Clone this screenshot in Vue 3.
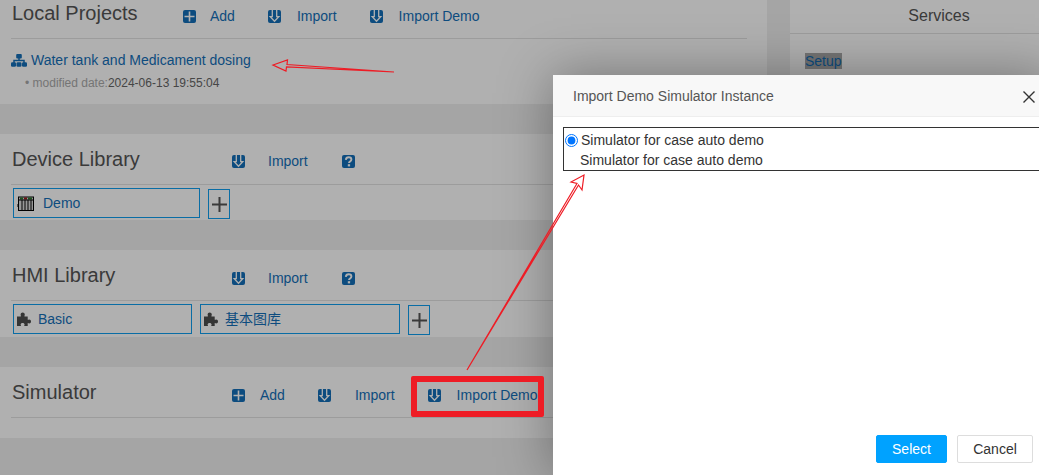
<template>
  <div class="page">
    <main class="left">
      <section class="panel local">
        <header class="head">
          <h2 class="title short">Local Projects</h2>
          <a v-for="a in localActions" :key="a.label" class="action" :class="a.cls">
            <svg class="ico" viewBox="0 0 13 13"><use :href="'#' + a.icon" /></svg>
            <span class="label">{{ a.label }}</span>
          </a>
        </header>
        <div class="project">
          <svg class="sitemap" viewBox="0 0 16 13">
            <rect x="5.2" y="0" width="5.6" height="4.4" rx="1" />
            <path d="M8 4v2.5M3 9V6.500h10V9" fill="none" stroke="currentColor" stroke-width="1.5" />
            <rect x="0" y="8.200" width="5" height="4.600" rx="1.200" />
            <rect x="5.500" y="8.200" width="5" height="4.600" rx="1.200" />
            <rect x="11" y="8.200" width="5" height="4.600" rx="1.200" />
          </svg>
          <span class="project-name">Water tank and Medicament dosing</span>
        </div>
        <div class="modified"><span class="dot">•</span> modified date:<span class="stamp">2024-06-13 19:55:04</span></div>
      </section>

      <section class="panel lib">
        <header class="head">
          <h2 class="title">Device Library</h2>
          <a class="action gap-23">
            <svg class="ico" viewBox="0 0 13 13"><use href="#i-down" /></svg>
            <span class="label">Import</span>
          </a>
          <svg class="ico help" viewBox="0 0 13 13"><use href="#i-help" /></svg>
        </header>
        <div class="chips">
          <div class="chip demo">
            <svg class="rack" viewBox="0 0 17 15">
              <rect x="1.500" y="1" width="15" height="13.500" fill="#ddd" stroke="#000" />
              <rect x="3" y="1.500" width="3" height="2" fill="#2c7a2c" />
              <rect x="7" y="1.500" width="3" height="2" fill="#a01818" />
              <rect x="11" y="1.500" width="4" height="2" fill="#2c7a2c" />
              <path d="M5 4v10M8 4v10M11 4v10M14 4v10M1 4h15M0 8v3" fill="none" stroke="#000" />
            </svg>
            <span class="chip-text">Demo</span>
          </div>
          <button class="plus">
            <svg viewBox="0 0 15 15"><path d="M7.500 0v15M0 7.500h15" stroke="currentColor" stroke-width="2" /></svg>
          </button>
        </div>
      </section>

      <section class="panel lib hmi">
        <header class="head">
          <h2 class="title">HMI Library</h2>
          <a class="action gap-23">
            <svg class="ico" viewBox="0 0 13 13"><use href="#i-down" /></svg>
            <span class="label">Import</span>
          </a>
          <svg class="ico help" viewBox="0 0 13 13"><use href="#i-help" /></svg>
        </header>
        <div class="chips">
          <div v-for="c in hmiLibs" :key="c.name" class="chip" :class="c.cls">
            <svg class="puzzle" viewBox="0 0 14 14"><use href="#i-puzzle" /></svg>
            <span class="chip-text">{{ c.name }}</span>
          </div>
          <button class="plus">
            <svg viewBox="0 0 15 15"><path d="M7.500 0v15M0 7.500h15" stroke="currentColor" stroke-width="2" /></svg>
          </button>
        </div>
      </section>

      <section class="panel sim">
        <header class="head">
          <h2 class="title">Simulator</h2>
          <a class="action gap-15">
            <svg class="ico" viewBox="0 0 13 13"><use href="#i-add" /></svg>
            <span class="label">Add</span>
          </a>
          <a class="action gap-24">
            <svg class="ico" viewBox="0 0 13 13"><use href="#i-down" /></svg>
            <span class="label">Import</span>
          </a>
          <a class="action">
            <svg class="ico" viewBox="0 0 13 13"><use href="#i-down" /></svg>
            <span class="label">Import Demo</span>
          </a>
        </header>
      </section>
    </main>

    <aside class="right">
      <div class="services">Services</div>
      <div class="service-list"><span class="setup">Setup</span></div>
    </aside>

    <svg class="defs" width="0" height="0">
      <symbol id="i-add" viewBox="0 0 13 13">
        <rect width="13" height="13" rx="2" fill="#146fb8" />
        <path d="M6.500 1.500v10M1.500 6.500h10" stroke="#fff" stroke-width="1.600" />
      </symbol>
      <symbol id="i-down" viewBox="0 0 13 13">
        <rect width="13" height="13" rx="2" fill="#146fb8" />
        <path d="M4.300 0v6.700H2.200L6.500 11.300 10.800 6.700H8.700V0" fill="none" stroke="#fff" stroke-width="1.300" />
      </symbol>
      <symbol id="i-help" viewBox="0 0 13 13">
        <rect width="13" height="13" rx="2" fill="#146fb8" />
        <path d="M3.800 4.800C4 3 5.200 2.300 6.700 2.300c1.600 0 2.700 1 2.700 2.300 0 2-2.400 1.900-2.400 3.500" fill="none" stroke="#fff" stroke-width="1.900" />
        <rect x="5.800" y="9.200" width="2.300" height="2.200" fill="#fff" />
      </symbol>
      <symbol id="i-puzzle" viewBox="0 0 14 14">
        <path d="M0 4.500h3.500C4.500 4.500 3.600 3.600 3.600 2.500 3.600 1.200 4.600.5 5.700.5s2.100.7 2.100 2c0 1.100-.9 2-.1 2h3v3c0 .8.900-.1 1.500-.1 1.100 0 1.800.9 1.800 2s-.7 2-1.800 2c-.6 0-1.500-.9-1.500-.1V14H7.500c-.8 0 .1-.9.1-1.500 0-1-.9-1.600-2-1.600s-2 .6-2 1.600c0 .6.900 1.500.1 1.500H0z" fill="#4d4d4d" />
      </symbol>
    </svg>

    <div class="overlay"></div>

    <div class="modal">
      <div class="modal-head">
        <span class="modal-title">Import Demo Simulator Instance</span>
        <svg class="close" viewBox="0 0 12 12"><path d="M.5.5l11 11M11.500.5l-11 11" stroke="#333" stroke-width="1.400" /></svg>
      </div>
      <div class="modal-body">
        <label class="option">
          <span class="radio-line"><input type="radio" class="radio" checked /><span>Simulator for case auto demo</span></span>
          <span class="desc">Simulator for case auto demo</span>
        </label>
      </div>
      <div class="modal-foot">
        <button class="btn primary">Select</button>
        <button class="btn">Cancel</button>
      </div>
    </div>

    <div class="mark"></div>
    <svg class="arrows" viewBox="0 0 1039 475">
      <path d="M394 72 287 64.500 287.500 60 273 65 286 71 286.500 67Z" />
      <path d="M467 370 577 183.500 571 182 584 175 582 190 578.500 185Z" />
    </svg>
  </div>
</template>

<script setup>
const localActions = [
  { label: 'Add', icon: 'i-add', cls: 'gap-14' },
  { label: 'Import', icon: 'i-down' },
  { label: 'Import Demo', icon: 'i-down' }
];

const hmiLibs = [
  { name: 'Basic', cls: 'basic' },
  { name: '基本图库', cls: 'cn' }
];
</script>

<style>
html, body { margin: 0; overflow: hidden; }
</style>

<style scoped>
.page {
  position: relative;
  display: flex;
  width: 1039px;
  height: 475px;
  overflow: hidden;
  background: #f0f0f0;
  font-family: "Liberation Sans", "Noto Sans CJK SC", sans-serif;
  font-size: 14px;
  color: #555;
}
.left { width: 767px; flex: none; }
.right { margin-left: 23px; width: 298px; flex: none; background: #fff; height: 475px; }
.defs { position: absolute; }

.panel { background: #fff; padding: 0 20px 0 11px; margin-bottom: 30px; box-sizing: border-box; }
.local { height: 104px; }
.lib { height: 86px; }
.hmi { height: 87px; }
.sim { height: 71px; }

.head {
  display: flex;
  align-items: center;
  height: 38px;
  border-bottom: 1px solid #e2e2e2;
}
.lib .head, .sim .head { height: 50px; }
.title {
  width: 220px;
  margin: 0 0 0 1px;
  flex: none;
  font-size: 20px;
  font-weight: normal;
  color: #555;
}
.title.short { width: 171px; padding-bottom: 12px; }
.local .action { margin-top: -6px; }
.lib .action, .lib .help { margin-top: 4px; }
.hmi .action, .hmi .help { margin-top: 6px; }
.sim .action { margin-top: 6px; }
.action { display: flex; align-items: center; margin-right: 33px; color: #146fb8; }
.label { margin-left: 16px; white-space: nowrap; }
.gap-14 .label { margin-left: 14px; }
.gap-15 .label { margin-left: 15px; }
.gap-23 .label { margin-left: 23px; }
.gap-24 .label { margin-left: 24px; }
.ico { width: 13px; height: 13px; flex: none; margin-top: 1px; }
.help { margin-left: 1px; }

.project { display: flex; align-items: center; margin-top: 13px; color: #146fb8; }
.sitemap { width: 16px; height: 13px; margin-right: 4px; fill: currentColor; }
.project-name { white-space: nowrap; }
.modified { margin-top: 8px; padding-left: 14px; font-size: 12px; color: #aaa; }
.stamp { color: #666; }

.chips { display: flex; gap: 8px; padding: 3px 0 0 2px; }
.chip {
  display: flex;
  align-items: center;
  height: 30px;
  box-sizing: border-box;
  border: 1px solid #0f9ef0;
  padding-left: 3px;
  color: #146fb8;
}
.demo { width: 187px; }
.basic { width: 179px; }
.cn { width: 200px; }
.cn .chip-text { margin-top: -2px; }
.rack { width: 17px; height: 15px; margin-right: 9px; }
.puzzle { width: 14px; height: 14px; margin-right: 7px; }
.plus {
  width: 22px;
  height: 30px;
  margin-top: 1px;
  padding: 0;
  border: 1px solid #0f9ef0;
  background: none;
  color: #555;
  display: flex;
  align-items: center;
  justify-content: center;
}
.plus svg { width: 15px; height: 15px; }

.services {
  height: 33px;
  line-height: 32px;
  text-align: center;
  font-size: 16px;
  border-bottom: 1px solid #e2e2e2;
  color: #555;
}
.service-list { padding: 19px 15px; }
.setup { background: #aaa; color: #146fb8; }

.overlay { position: absolute; inset: 0; background: rgba(0, 0, 0, 0.31); }

.modal {
  position: absolute;
  left: 553px;
  top: 75px;
  width: 500px;
  height: 400px;
  background: #fff;
  box-shadow: 0 0 50px rgba(0, 0, 0, 0.35);
  display: flex;
  flex-direction: column;
  color: #333;
}
.modal-head {
  height: 42px;
  box-sizing: border-box;
  flex: none;
  display: flex;
  align-items: center;
  padding-left: 20px;
  background: #f8f8f8;
  border-bottom: 1px solid #eee;
  color: #555;
}
.close { position: absolute; left: 470px; top: 16px; width: 12px; height: 12px; }
.modal-body { padding: 10px; flex: 1; }
.option {
  display: flex;
  flex-direction: column;
  height: 44px;
  box-sizing: border-box;
  border: 1px solid #333;
  padding-top: 2px;
  line-height: 20px;
}
.radio-line { display: flex; align-items: center; }
.radio { width: 13px; height: 13px; margin: 0 3px 0 1px; accent-color: #0075ff; }
.desc { padding-left: 16px; }
.modal-foot { position: absolute; left: 323px; top: 360px; display: flex; gap: 10px; }
.btn {
  height: 28px;
  width: 76px;
  box-sizing: border-box;
  border: 1px solid #ddd;
  border-radius: 2px;
  background: #fff;
  color: #333;
  font: 14px "Liberation Sans", sans-serif;
  padding: 0;
}
.btn.primary { width: 71px; background: #00a2ff; border-color: #00a2ff; color: #fff; }

.mark {
  position: absolute;
  left: 411px;
  top: 376px;
  width: 133px;
  height: 41px;
  box-sizing: border-box;
  border: 6px solid #ee1c25;
  border-radius: 2px;
}
.arrows { position: absolute; inset: 0; width: 1039px; height: 475px; fill: none; stroke: #ee1c25; stroke-width: 1.2; pointer-events: none; }
</style>
